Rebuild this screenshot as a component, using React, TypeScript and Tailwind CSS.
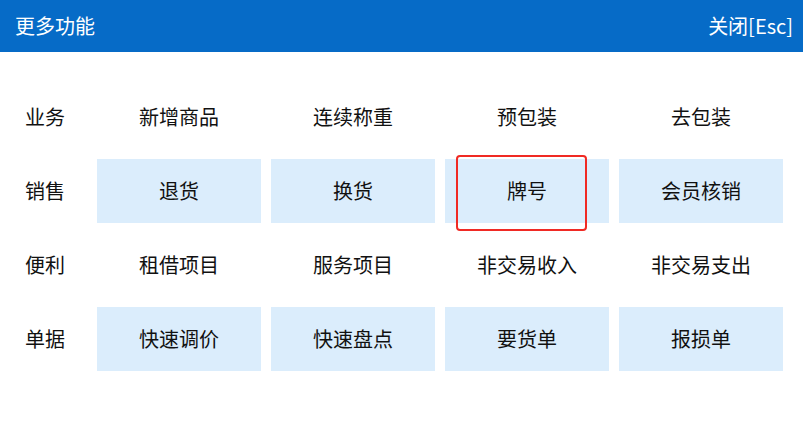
import React from "react";

const rows: { label: string; items: string[]; filled: boolean }[] = [
  { label: "业务", items: ["新增商品", "连续称重", "预包装", "去包装"], filled: false },
  { label: "销售", items: ["退货", "换货", "牌号", "会员核销"], filled: true },
  { label: "便利", items: ["租借项目", "服务项目", "非交易收入", "非交易支出"], filled: false },
  { label: "单据", items: ["快速调价", "快速盘点", "要货单", "报损单"], filled: true },
];

export default function App() {
  return (
    <div
      className="w-[803px] h-[435px] bg-white relative text-[#111]"
      style={{ fontFamily: '"Noto Sans CJK SC", "Noto Sans", sans-serif' }}
    >
      <div className="h-[52px] bg-[#066bc7] flex items-center justify-between pl-[15px] pr-[10px] text-white text-[20px]">
        <span>更多功能</span>
        <span>关闭[Esc]</span>
      </div>
      <div className="pt-[33px] pr-[20px] flex flex-col gap-[10px]">
        {rows.map((r) => (
          <div key={r.label} className="flex h-[64px] text-[20px]">
            <div className="w-[97px] pl-[25px] flex items-center">{r.label}</div>
            <div className="flex gap-[10px]">
              {r.items.map((it) => (
                <div
                  key={it}
                  className={`w-[164px] flex items-center justify-center ${r.filled ? "bg-[#dbedfc]" : ""}`}
                >
                  {it}
                </div>
              ))}
            </div>
          </div>
        ))}
      </div>
      <div className="absolute left-[456px] top-[155px] w-[131px] h-[76px] border-2 border-[#f02a24] rounded-[4px]" />
    </div>
  );
}
